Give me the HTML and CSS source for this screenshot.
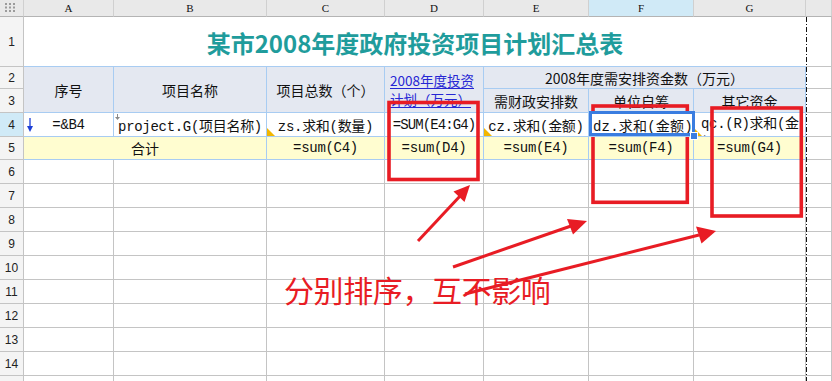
FILE: index.html
```html
<!DOCTYPE html>
<html lang="zh-CN">
<head>
    <meta charset="UTF-8">
    <title>某市2008年度政府投资项目计划汇总表</title>
    <link rel="stylesheet" href="styles.css">
</head>
<body>
    <div class="sheet">
        <!-- cabecera de columnas -->
        <div class="h corner">
            <svg width="11" height="9" viewBox="0 0 11 9">
                <rect x="0" y="0" width="2" height="2"/><rect x="4" y="0" width="2" height="2"/><rect x="8" y="0" width="2" height="2"/>
                <rect x="0" y="3.5" width="2" height="2"/><rect x="4" y="3.5" width="2" height="2"/><rect x="8" y="3.5" width="2" height="2"/>
                <rect x="0" y="7" width="2" height="2"/><rect x="4" y="7" width="2" height="2"/><rect x="8" y="7" width="2" height="2"/>
            </svg>
        </div>
        <div class="h">A</div>
        <div class="h">B</div>
        <div class="h">C</div>
        <div class="h">D</div>
        <div class="h">E</div>
        <div class="h active">F</div>
        <div class="h">G</div>
        <div class="h"></div>

        <!-- fila 1 -->
        <div class="n">1</div>
        <div class="title">某市2008年度政府投资项目计划汇总表</div>
        <div class="c"></div>

        <!-- filas 2 y 3 -->
        <div class="n">2</div>
        <div class="t hd tall">序号</div>
        <div class="t hd tall">项目名称</div>
        <div class="t hd tall">项目总数（个）</div>
        <div class="t hd tall plan">
            <span>2008年度投资</span>
            <span>计划（万元）</span>
        </div>
        <div class="t hd wide">2008年度需安排资金数（万元）</div>
        <div class="c"></div>

        <div class="n">3</div>
        <div class="t hd">需财政安排数</div>
        <div class="t hd">单位自筹</div>
        <div class="t hd">其它资金</div>
        <div class="c"></div>

        <!-- fila 4 -->
        <div class="n active">4</div>
        <div class="t mono mark">
            <svg class="down" width="6" height="14" viewBox="0 0 6 14">
                <line x1="3" y1="0" x2="3" y2="10" stroke="#1d3fd6" stroke-width="1.3"/>
                <polygon points="0,8 6,8 3,14" fill="#1d3fd6"/>
            </svg>
            =&amp;B4
        </div>
        <div class="t mono mark">
            <svg class="tick" width="5" height="6" viewBox="0 0 5 6">
                <line x1="2.5" y1="0" x2="2.5" y2="4" stroke="#8a8a8a"/>
                <polygon points="0,3 5,3 2.5,6" fill="#8a8a8a"/>
            </svg>
            project.G(项目名称)
        </div>
        <div class="t mono flag">zs.求和(数量)</div>
        <div class="t mono tight">=SUM(E4:G4)</div>
        <div class="t mono flag">cz.求和(金额)</div>
        <div class="t mono sel">dz.求和(金额)</div>
        <div class="t mono flag wrap">qc.(R)求和(金<br>额)</div>
        <div class="c"></div>

        <!-- fila 5 -->
        <div class="n">5</div>
        <div class="t sum pair">合计</div>
        <div class="t sum mono">=sum(C4)</div>
        <div class="t sum mono">=sum(D4)</div>
        <div class="t sum mono">=sum(E4)</div>
        <div class="t sum mono">=sum(F4)</div>
        <div class="t sum mono">=sum(G4)</div>
        <div class="c"></div>

        <!-- filas vacías -->
        <div class="n">6</div><div class="c"></div><div class="c"></div><div class="c"></div><div class="c"></div><div class="c"></div><div class="c"></div><div class="c"></div><div class="c"></div>
        <div class="n">7</div><div class="c"></div><div class="c"></div><div class="c"></div><div class="c"></div><div class="c"></div><div class="c"></div><div class="c"></div><div class="c"></div>
        <div class="n">8</div><div class="c"></div><div class="c"></div><div class="c"></div><div class="c"></div><div class="c"></div><div class="c"></div><div class="c"></div><div class="c"></div>
        <div class="n">9</div><div class="c"></div><div class="c"></div><div class="c"></div><div class="c"></div><div class="c"></div><div class="c"></div><div class="c"></div><div class="c"></div>
        <div class="n">10</div><div class="c"></div><div class="c"></div><div class="c"></div><div class="c"></div><div class="c"></div><div class="c"></div><div class="c"></div><div class="c"></div>
        <div class="n">11</div><div class="c"></div><div class="c"></div><div class="c"></div><div class="c"></div><div class="c"></div><div class="c"></div><div class="c"></div><div class="c"></div>
        <div class="n">12</div><div class="c"></div><div class="c"></div><div class="c"></div><div class="c"></div><div class="c"></div><div class="c"></div><div class="c"></div><div class="c"></div>
        <div class="n">13</div><div class="c"></div><div class="c"></div><div class="c"></div><div class="c"></div><div class="c"></div><div class="c"></div><div class="c"></div><div class="c"></div>
        <div class="n">14</div><div class="c"></div><div class="c"></div><div class="c"></div><div class="c"></div><div class="c"></div><div class="c"></div><div class="c"></div><div class="c"></div>
        <div class="n">15</div><div class="c"></div><div class="c"></div><div class="c"></div><div class="c"></div><div class="c"></div><div class="c"></div><div class="c"></div><div class="c"></div>
    </div>

    <div class="note">分别排序，互不影响</div>

    <svg class="marks" width="832" height="381" viewBox="0 0 832 381">
        <line x1="806.5" y1="17" x2="806.5" y2="381" stroke="#111" stroke-width="1" stroke-dasharray="5 2 1 2"/>
        <g fill="none" stroke="#e81c24" stroke-width="3.6">
            <rect x="389" y="102.5" width="89" height="77"/>
            <rect x="593" y="106" width="94.3" height="96.3"/>
            <rect x="712" y="108" width="89.3" height="108"/>
        </g>
        <g stroke="#e81c24" stroke-width="3">
            <line x1="418" y1="241" x2="461" y2="195"/>
            <line x1="453" y1="267" x2="571" y2="226"/>
            <line x1="465" y1="294" x2="699" y2="235"/>
        </g>
        <g fill="#e81c24">
            <polygon points="470,185 464.5,202 453.5,191.5"/>
            <polygon points="587,221 573,234.5 567,219"/>
            <polygon points="716,231 701.5,243.5 696,226.5"/>
        </g>
    </svg>
</body>
</html>
```

FILE: styles.css
```css
/* General */
* {
    box-sizing: border-box;
}

body {
    margin: 0;
    width: 832px;
    height: 381px;
    overflow: hidden;
    position: relative;
    background-color: #fff;
    color: #111;
    font-family: "Noto Sans CJK SC", sans-serif;
    font-size: 14px;
}

/* Hoja */
.sheet {
    display: grid;
    grid-template-columns: 24px 90px 153px 118px 99px 105px 105px 112px 26px;
    grid-template-rows: 17px 50px 22px 24px 24px 23px repeat(10, 24px);
}

.sheet > div {
    display: flex;
    align-items: center;
    justify-content: center;
    white-space: nowrap;
    overflow: hidden;
    border-right: 1px solid #c4c4c4;
    border-bottom: 1px solid #c4c4c4;
}

/* Cabeceras */
.h {
    background-color: #e9e9e9;
    border-right-color: #d0d0d0 !important;
    border-bottom-color: #b4b4b4 !important;
    font-family: "Liberation Serif", serif;
    font-size: 11px;
}

.corner svg {
    fill: #9b9b9b;
    margin: -2px 2px 0 0;
}

.n {
    background-color: #f4f4f4;
    font-family: "Liberation Sans", sans-serif;
    font-size: 12px;
    color: #222;
}

.h.active,
.n.active {
    background-color: #d0eaf7;
}

/* Título */
.title {
    grid-column: span 7;
    color: #1f9c9c;
    font-size: 24px;
    font-weight: bold;
    letter-spacing: 0;
    padding-top: 2px;
    border-right: none !important;
    border-bottom-color: #a8ccf2 !important;
}

/* Tabla */
.t {
    border-color: #a8ccf2 !important;
    background-color: #fff;
}

.hd {
    background-color: #e4e8f1;
}

.tall {
    grid-row: span 2;
}

.wide {
    grid-column: span 3;
}

.pair {
    grid-column: span 2;
}

.plan {
    flex-direction: column;
    align-items: flex-start !important;
    padding-left: 5px;
    color: #2626d4;
    font-size: 13.5px;
    line-height: 19px;
}

.plan span {
    text-decoration: underline;
    text-underline-offset: 2px;
}

.mono {
    font-family: "Liberation Mono", "Noto Sans CJK SC", monospace;
    letter-spacing: -0.3px;
}

.tight {
    letter-spacing: -0.9px;
}

.sum {
    background-color: #fffdd0;
}

/* Marcas de celda */
.mark,
.flag,
.sel {
    position: relative;
}

.down {
    position: absolute;
    left: 3px;
    top: 5px;
}

.tick {
    position: absolute;
    left: 1px;
    top: 1px;
}

.flag::after {
    content: "";
    position: absolute;
    left: 0;
    bottom: 0;
    width: 8px;
    height: 8px;
    background-color: #f2b600;
    clip-path: polygon(0 0, 0 100%, 100% 100%);
}

.sel {
    justify-content: flex-start !important;
    padding-left: 4px;
    letter-spacing: 0.2px;
    overflow: visible !important;
    z-index: 2;
}

.sel::after {
    content: "";
    position: absolute;
    left: 0;
    top: -2px;
    right: -2px;
    bottom: 0;
    border: 3px solid #3a7de0;
}

.sel::before {
    content: "";
    position: absolute;
    right: -5px;
    bottom: -4px;
    width: 6px;
    height: 6px;
    background-color: #3a7de0;
    border: 1px solid #fff;
    z-index: 1;
}

.wrap {
    white-space: normal !important;
    justify-content: flex-start !important;
    align-items: flex-start !important;
    padding: 2px 0 0 7px;
    line-height: 19px;
}

/* Anotaciones */
.note {
    position: absolute;
    left: 284px;
    top: 271px;
    color: #e81c24;
    font-size: 30px;
    line-height: 36px;
    letter-spacing: -0.4px;
}

.marks {
    position: absolute;
    left: 0;
    top: 0;
    pointer-events: none;
}
```
